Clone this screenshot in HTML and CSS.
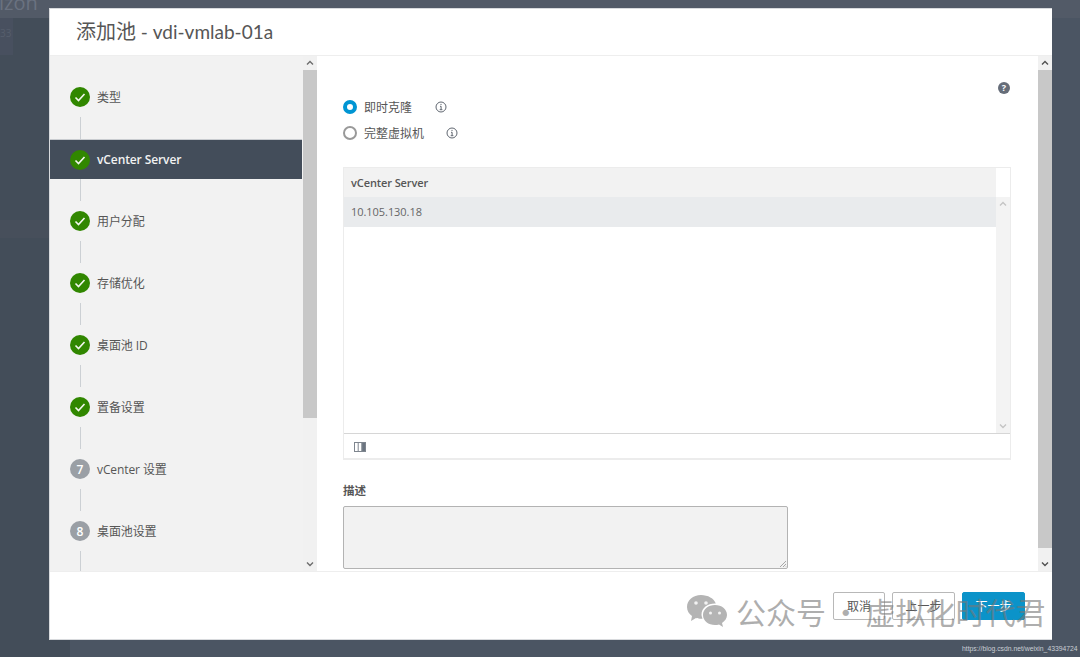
FILE: index.html
```html
<!DOCTYPE html>
<html lang="zh">
<head>
<meta charset="utf-8">
<title>添加池</title>
<link rel="stylesheet" href="styles.css">
</head>
<body>
<div class="backdrop">
  <div class="back-top"><span class="back-brand">Horizon</span></div>
  <div class="back-nav"><div class="back-badge">33</div><div class="back-band"></div></div>
</div>
<div class="modal">
  <header class="modal-head"><h1><span class="title-cjk">添加池</span> - vdi-vmlab-01a</h1></header>
  <div class="modal-body">
    <nav class="side">
      <div class="steps">
        <div class="step"><span class="dot done"><svg viewBox="0 0 20 20"><path d="M5.500 10.500l3 3 6-6.500"/></svg></span><span>类型</span></div>
        <div class="line"></div>
        <div class="step active"><span class="dot done"><svg viewBox="0 0 20 20"><path d="M5.500 10.500l3 3 6-6.500"/></svg></span><span>vCenter Server</span></div>
        <div class="line"></div>
        <div class="step"><span class="dot done"><svg viewBox="0 0 20 20"><path d="M5.500 10.500l3 3 6-6.500"/></svg></span><span>用户分配</span></div>
        <div class="line"></div>
        <div class="step"><span class="dot done"><svg viewBox="0 0 20 20"><path d="M5.500 10.500l3 3 6-6.500"/></svg></span><span>存储优化</span></div>
        <div class="line"></div>
        <div class="step"><span class="dot done"><svg viewBox="0 0 20 20"><path d="M5.500 10.500l3 3 6-6.500"/></svg></span><span>桌面池 ID</span></div>
        <div class="line"></div>
        <div class="step"><span class="dot done"><svg viewBox="0 0 20 20"><path d="M5.500 10.500l3 3 6-6.500"/></svg></span><span>置备设置</span></div>
        <div class="line"></div>
        <div class="step"><span class="dot todo">7</span><span>vCenter 设置</span></div>
        <div class="line"></div>
        <div class="step"><span class="dot todo">8</span><span>桌面池设置</span></div>
        <div class="line"></div>
      </div>
    </nav>
    <div class="bar side-bar">
      <svg class="arrow" viewBox="0 0 10 6"><path d="M2 4.500l3-3 3 3"/></svg>
      <div class="track"><div class="thumb thumb-side"></div></div>
      <svg class="arrow" viewBox="0 0 10 6"><path d="M2 1.500l3 3 3-3"/></svg>
    </div>
    <main class="main">
      <div class="help">?</div>
      <div class="radios">
        <div class="radio-row">
          <span class="radio on"></span><span class="radio-text">即时克隆</span>
          <svg class="info info-first" viewBox="0 0 12 12"><circle cx="6" cy="6" r="5"/><path d="M5 5.300h1.100v3.200M4.700 8.700h2.700M6 2.900v1.100"/></svg>
        </div>
        <div class="radio-row">
          <span class="radio"></span><span class="radio-text">完整虚拟机</span>
          <svg class="info" viewBox="0 0 12 12"><circle cx="6" cy="6" r="5"/><path d="M5 5.300h1.100v3.200M4.700 8.700h2.700M6 2.900v1.100"/></svg>
        </div>
      </div>
      <section class="grid">
        <div class="grid-main">
          <div class="grid-rows">
            <div class="grid-head">vCenter Server</div>
            <div class="grid-row">10.105.130.18</div>
          </div>
          <div class="grid-scroll">
            <div class="grid-corner"></div>
            <div class="grid-track">
              <svg class="arrow pale" viewBox="0 0 10 6"><path d="M2 4.500l3-3 3 3"/></svg>
              <svg class="arrow pale" viewBox="0 0 10 6"><path d="M2 1.500l3 3 3-3"/></svg>
            </div>
          </div>
        </div>
        <div class="grid-foot">
          <svg class="cols" viewBox="0 0 12 10"><rect x="0.500" y="0.500" width="11" height="9"/><path d="M4.200 .5v9M8 .5v9"/><rect class="cols-fill" x="8" y="0.500" width="3.500" height="9"/></svg>
        </div>
      </section>
      <div class="desc-label">描述</div>
      <div class="desc-box">
        <svg class="grip" viewBox="0 0 8 8"><path d="M7 1L1 7M7 4L4 7M7 6.500L6.500 7"/></svg>
      </div>
    </main>
    <div class="bar main-bar">
      <svg class="arrow dark" viewBox="0 0 10 6"><path d="M2 4.500l3-3 3 3"/></svg>
      <div class="track"><div class="thumb thumb-main"></div></div>
      <svg class="arrow dark" viewBox="0 0 10 6"><path d="M2 1.500l3 3 3-3"/></svg>
    </div>
  </div>
  <footer class="modal-foot">
    <button class="btn btn-cancel">取消</button>
    <button class="btn btn-prev">上一步</button>
    <button class="btn btn-next">下一步</button>
  </footer>
</div>
<div class="watermark">
  <svg class="wechat" viewBox="0 0 42 34">
    <path d="M15 1C7 1 1 6 1 13c0 4 2 7 5 9l-1 5 5-3c2 .6 3.500 .8 5 .8h1.500C16 23 15.500 22 15.500 20.500 15.500 14 21.500 9.500 29 9.500h.8C28 4.500 22 1 15 1z"/>
    <path d="M41 21c0-6-5.500-10-12-10s-12 4-12 10 5.500 10 12 10c1.400 0 2.800-.2 4-.6l4 2.600-1-4c3-2 5-4.800 5-8z"/>
    <circle class="eye" cx="10" cy="9" r="1.800"/><circle class="eye" cx="20" cy="9" r="1.800"/>
    <circle class="eye" cx="24.500" cy="19" r="1.500"/><circle class="eye" cx="33.500" cy="19" r="1.500"/>
  </svg>
  <span>公众号 · 虚拟化时代君</span>
</div>
<div class="csdn">https://blog.csdn.net/weixin_43394724</div>
</body>
</html>
```
FILE: styles.css
```css
* { box-sizing: border-box; }
html, body { margin: 0; height: 657px; overflow: hidden; }
body {
  position: relative;
  background: #4b5563;
  font-family: "Open Sans", "Noto Sans CJK SC", sans-serif;
  color: #565656;
}
.backdrop { position: absolute; inset: 0; }
.back-top { height: 18px; background: #525a67; overflow: hidden; }
.back-brand { font-size: 20px; color: #6a7280; line-height: 6px; display: block; margin-left: -36px; }
.back-nav { position: absolute; left: 0; top: 18px; bottom: 0; width: 70px; background: #434d59; }
.back-badge { width: 13px; height: 37px; background: #48505f; color: #565e6c; font-size: 10px; line-height: 30px; overflow: hidden; }
.back-band { height: 18px; margin-top: 165px; background: #474f5b; }

.modal {
  position: absolute;
  left: 49px; top: 8px;
  width: 1003px; height: 632px;
  background: #fff;
  display: flex;
  flex-direction: column;
  border: 1px solid #d8dadd;
  border-width: 1px 0 1px 1px;
}
.modal-head {
  height: 47px;
  flex: none;
  border-bottom: 1px solid #eeeeee;
  padding: 0 0 3px 26px;
  display: flex;
  align-items: center;
}
.modal-head h1 {
  margin: 0;
  font-weight: 400;
  font-size: 19px;
  color: #565656;
  font-family: "Lato", "Noto Sans CJK SC", sans-serif;
}
.title-cjk { font-size: 20px; }
.modal-body { flex: none; height: 515px; display: flex; overflow: hidden; }

.side { width: 253px; flex: none; background: #f2f2f2; padding-top: 21px; overflow: hidden; }
.steps { height: 494px; overflow: hidden; }
.step {
  height: 40px;
  display: flex;
  align-items: center;
  gap: 7px;
  padding-left: 20px;
  font-size: 12px;
  color: #565656;
  font-weight: 600;
  letter-spacing: -.1px;
}
.step span:last-child { font-weight: 400; }
.step.active { background: #434d5a; color: #f2f2f2; width: 252px; border-top: 1px solid #c9ccd0; }
.step.active span:last-child { font-weight: 600; }
.dot {
  width: 20px; height: 20px;
  border-radius: 50%;
  display: flex;
  align-items: center;
  justify-content: center;
  flex: none;
  color: #fff;
  font-size: 12px;
  font-weight: 600;
}
.dot svg { width: 20px; height: 20px; fill: none; stroke: #f4f7ef; stroke-width: 1.600; }
.done { background: #318700; }
.todo { background: #9a9fa5; }
.line { width: 1px; height: 22px; margin-left: 30px; background: #ccd0d4; }

.bar { flex: none; width: 14px; display: flex; flex-direction: column; background: #f1f1f1; }
.track { flex: 1; min-height: 0; }
.thumb { background: #c8c8c8; }
.thumb-side { height: 348px; }
.thumb-main { height: 478px; }
.arrow { width: 14px; height: 14px; flex: none; padding: 4px 2px; fill: none; stroke: #6c6c6c; stroke-width: 1.400; }
.arrow.dark { stroke: #505050; }
.arrow.pale { stroke: #c4c4c4; }

.main { flex: 1; min-width: 0; position: relative; padding: 42px 27px 0 26px; overflow: hidden; background: #fff; }
.help {
  position: absolute;
  left: 681px; top: 26px;
  width: 12px; height: 12px;
  border-radius: 50%;
  background: #666d79;
  color: #fff;
  font-size: 9px;
  line-height: 12px;
  font-weight: 700;
  text-align: center;
}
.radios { display: flex; flex-direction: column; gap: 8px; height: 69px; }
.radio-row { display: flex; align-items: center; height: 18px; font-size: 12px; }
.radio {
  width: 14px; height: 14px;
  border-radius: 50%;
  border: 2px solid #999;
  background: #fff;
  margin-right: 7px;
  flex: none;
}
.radio.on { border: 4px solid #0095d3; }
.radio-text { color: #565656; }
.info { width: 12px; height: 12px; margin-left: 22px; fill: none; stroke: #5f6670; stroke-width: 1; flex: none; }
.info-first { margin-left: 23px; }

.grid { width: 668px; height: 293px; border: 1px solid #ececec; border-bottom-width: 2px; display: flex; flex-direction: column; }
.grid-main { height: 266px; display: flex; border-bottom: 1px solid #d6d6d6; flex: none; }
.grid-rows { flex: 1; }
.grid-head { height: 29px; background: #f2f2f2; padding-left: 7px; font-size: 11px; font-weight: 600; line-height: 29px; color: #565656; letter-spacing: -.1px; }
.grid-row { height: 30px; background: #e9ebed; padding-left: 7px; font-size: 11px; line-height: 30px; color: #666; letter-spacing: -.05px; }
.grid-scroll { width: 14px; flex: none; display: flex; flex-direction: column; }
.grid-corner { height: 29px; background: #fff; }
.grid-track { flex: 1; background: #f3f3f3; display: flex; flex-direction: column; justify-content: space-between; }
.grid-foot { flex: 1; padding: 2px 0 0 10px; display: flex; align-items: center; }
.cols { width: 12px; height: 10px; fill: none; stroke: #7e858e; stroke-width: 1; }
.cols-fill { fill: #6b7480; }

.desc-label { margin-top: 23px; font-size: 11.500px; font-weight: 700; color: #565656; line-height: 16px; }
.desc-box {
  position: relative;
  width: 445px; height: 63px;
  margin-top: 7px;
  background: #f2f2f2;
  border: 1px solid #b3b3b3;
  border-radius: 2px;
}
.grip { position: absolute; right: 0; bottom: 0; width: 8px; height: 8px; fill: none; stroke: #a8a8a8; stroke-width: 1; }

.modal-foot {
  flex: 1;
  border-top: 1px solid #eeeeee;
  display: flex;
  justify-content: flex-end;
  align-items: flex-start;
  padding: 20px 27px 0 0;
  gap: 7px;
}
.btn {
  height: 28px;
  border-radius: 2px;
  font: 400 12px "Open Sans", "Noto Sans CJK SC", sans-serif;
  padding: 0;
  background: #fff;
  color: #565656;
  border: 1px solid #b8b8b8;
}
.btn-cancel { width: 52px; }
.btn-prev { width: 63px; }
.btn-next { width: 63px; background: #0b93c9; border-color: #0b93c9; color: #fff; }

.watermark {
  position: absolute;
  left: 686px; top: 594px;
  display: flex;
  align-items: center;
  gap: 8px;
  font: 400 30px "Noto Sans CJK SC", sans-serif;
  color: rgba(120,120,120,.6);
  white-space: nowrap;
  line-height: 34px;
  word-spacing: -2px;
}
.wechat { width: 42px; height: 34px; fill: #b4b4b4; }
.wechat .eye { fill: #f2f2f2; }
.csdn {
  position: absolute;
  left: 962px; top: 644px;
  font: 400 6.800px "Liberation Sans", sans-serif;
  color: #c9ced4;
  line-height: 10px;
  white-space: nowrap;
}
```
